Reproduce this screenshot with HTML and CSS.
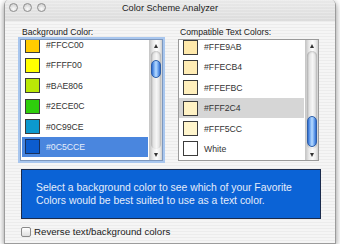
FILE: index.html
```html
<!DOCTYPE html>
<html>
<head>
<meta charset="utf-8">
<link rel="stylesheet" href="styles.css">
</head>
<body>
<div class="window">
  <div class="titlebar">
    <div class="lights"><span class="light"></span><span class="light"></span><span class="light"></span></div>
    <div class="title">Color Scheme Analyzer</div>
  </div>
  <div class="content">
    <div class="columns">
      <div class="col">
        <div class="label">Background Color:</div>
        <div class="list focused">
          <div class="rows rows-left">
            <div class="row"><span class="sw" style="background:#FFCC00"></span><span class="txt">#FFCC00</span></div>
            <div class="row"><span class="sw" style="background:#FFFF00"></span><span class="txt">#FFFF00</span></div>
            <div class="row"><span class="sw" style="background:#BAE806"></span><span class="txt">#BAE806</span></div>
            <div class="row"><span class="sw" style="background:#2ECE0C"></span><span class="txt">#2ECE0C</span></div>
            <div class="row"><span class="sw" style="background:#0C99CE"></span><span class="txt">#0C99CE</span></div>
            <div class="row selected"><span class="sw" style="background:#0C5CCE"></span><span class="txt">#0C5CCE</span></div>
          </div>
          <div class="scrollbar">
            <div class="arrow up"></div>
            <div class="track track-left"><div class="thumb thumb-left"></div></div>
            <div class="arrow down"></div>
          </div>
        </div>
      </div>
      <div class="col">
        <div class="label">Compatible Text Colors:</div>
        <div class="list">
          <div class="rows rows-right">
            <div class="row"><span class="sw" style="background:#FFE9AB"></span><span class="txt">#FFE9AB</span></div>
            <div class="row"><span class="sw" style="background:#FFECB4"></span><span class="txt">#FFECB4</span></div>
            <div class="row"><span class="sw" style="background:#FFEFBC"></span><span class="txt">#FFEFBC</span></div>
            <div class="row gray"><span class="sw" style="background:#FFF2C4"></span><span class="txt">#FFF2C4</span></div>
            <div class="row"><span class="sw" style="background:#FFF5CC"></span><span class="txt">#FFF5CC</span></div>
            <div class="row"><span class="sw" style="background:#FFFFFF"></span><span class="txt">White</span></div>
          </div>
          <div class="scrollbar">
            <div class="arrow up"></div>
            <div class="track track-right"><div class="thumb thumb-right"></div></div>
            <div class="arrow down"></div>
          </div>
        </div>
      </div>
    </div>
    <div class="message">Select a background color to see which of your Favorite<br>Colors would be best suited to use as a text color.</div>
    <div class="check-row"><span class="checkbox"></span><span class="check-label">Reverse text/background colors</span></div>
  </div>
</div>
</body>
</html>
```

FILE: styles.css
```css
html, body {
  margin: 0;
  padding: 0;
  background: #ffffff;
}
body {
  font-family: "Liberation Sans", Arial, sans-serif;
  color: #222;
}
.window {
  margin-left: 4px;
  width: 332px;
  height: 244px;
  box-sizing: border-box;
  border: 1px solid #9c9c9c;
  border-top: none;
  border-radius: 5px 5px 0 0;
  background: repeating-linear-gradient(to bottom, #ececec 0, #ececec 1px, #f5f5f5 1px, #f5f5f5 3px);
  box-shadow: 0 2px 6px rgba(0, 0, 0, 0.45);
  overflow: hidden;
}
.titlebar {
  height: 21px;
  position: relative;
  background:
    repeating-linear-gradient(to bottom, rgba(255,255,255,0.25) 0, rgba(255,255,255,0.25) 1px, rgba(0,0,0,0) 1px, rgba(0,0,0,0) 3px),
    linear-gradient(to bottom, #e9e9e9, #dcdcdc);
  display: flex;
  align-items: flex-start;
}
.lights {
  display: flex;
  gap: 5px;
  padding: 3px 0 0 4px;
}
.light {
  width: 9px;
  height: 9px;
  box-sizing: border-box;
  border-radius: 50%;
  border: 1px solid #8e8e8e;
  background: radial-gradient(circle at 50% 70%, #fafafa 0, #dcdcdc 60%, #c4c4c4 100%);
}
.title {
  position: absolute;
  left: 0;
  right: 0;
  top: 2px;
  text-align: center;
  font-size: 9.2px;
  line-height: 12px;
  color: #222;
}
.content {
  padding: 5px 16px 0 15px;
}
.columns {
  display: grid;
  grid-template-columns: 143px 141px;
  column-gap: 15px;
}
.label {
  height: 12px;
  line-height: 12px;
  font-size: 8.6px;
  padding-left: 2px;
  margin-bottom: 1px;
  color: #222;
}
.list {
  height: 122px;
  box-sizing: border-box;
  border: 1px solid #9a9a9a;
  background: #fff;
  display: flex;
  overflow: hidden;
}
.list.focused {
  border-color: #7d97bd;
  box-shadow: 0 0 0 2px #a8c6ee;
}
.rows {
  flex: 1;
  overflow: hidden;
  display: flex;
  flex-direction: column;
}
.rows-left { padding-top: 0; }
.rows-left .row:first-child { margin-top: -5.2px; }
.rows-right .row:first-child { margin-top: -3.2px; }
.row {
  flex: none;
  height: 20.4px;
  display: flex;
  align-items: center;
  padding-left: 4px;
  margin: 0 1px 0 0;
  font-size: 8.7px;
  color: #333;
}
.row.selected {
  background: #4a86de;
  margin: 0 1px;
  padding-left: 3px;
  color: #e6eefb;
}
.row.selected .sw { border-color: #18305c; }
.row.gray {
  background: #d6d6d6;
}
.sw {
  width: 15px;
  height: 15px;
  box-sizing: border-box;
  border: 1px solid #3c3c3c;
  margin-right: 6px;
  flex: none;
}
.scrollbar {
  width: 13px;
  flex: none;
  display: flex;
  flex-direction: column;
  background: linear-gradient(to right, #c9c9c9 0, #e9e9e9 25%, #fcfcfc 55%, #ececec 80%, #cfcfcf 100%);
  border-left: 1px solid #c8c8c8;
  box-sizing: border-box;
}
.arrow {
  height: 11px;
  flex: none;
  position: relative;
}
.arrow::after {
  content: "";
  position: absolute;
  left: 50%;
  top: 50%;
  width: 0;
  height: 0;
  border-left: 2.5px solid transparent;
  border-right: 2.5px solid transparent;
  transform: translate(-50%, -50%);
}
.arrow.up::after { border-bottom: 4px solid #333; }
.arrow.down::after { border-top: 4px solid #333; }
.track {
  flex: 1;
  border-radius: 6px;
  background: linear-gradient(to right, #bdbdbd 0, #e4e4e4 25%, #f6f6f6 55%, #e6e6e6 80%, #c2c2c2 100%);
  box-shadow: inset 0 1px 2px rgba(0,0,0,0.2);
  margin: 0 1px;
  box-sizing: border-box;
}
.track-left { padding-top: 9px; }
.track-right { padding-top: 65px; }
.thumb {
  width: 10px;
  border-radius: 5px;
  box-sizing: border-box;
  border: 1px solid #2c5ea8;
  background: linear-gradient(to right, #2f6cd0 0, #7fb3f4 30%, #b8dbff 50%, #7fb3f4 70%, #2f6cd0 100%);
}
.thumb-left { height: 18px; }
.thumb-right { height: 31px; }
.message {
  margin: 8px 0 0 1px;
  width: 300px;
  height: 50px;
  box-sizing: border-box;
  border: 1px solid #1b2b4c;
  background: #0b63d6;
  color: #e4ecfa;
  font-size: 10.4px;
  line-height: 13px;
  padding-left: 14px;
  display: flex;
  align-items: center;
}
.check-row {
  display: flex;
  align-items: center;
  margin: 8px 0 0 1px;
  height: 10px;
}
.checkbox {
  width: 10px;
  height: 10px;
  box-sizing: border-box;
  border: 1px solid #8a8a8a;
  border-radius: 2px;
  background: linear-gradient(to bottom, #ffffff, #dedede);
  margin-right: 3px;
}
.check-label {
  font-size: 9.7px;
  line-height: 12px;
  color: #222;
}
```
